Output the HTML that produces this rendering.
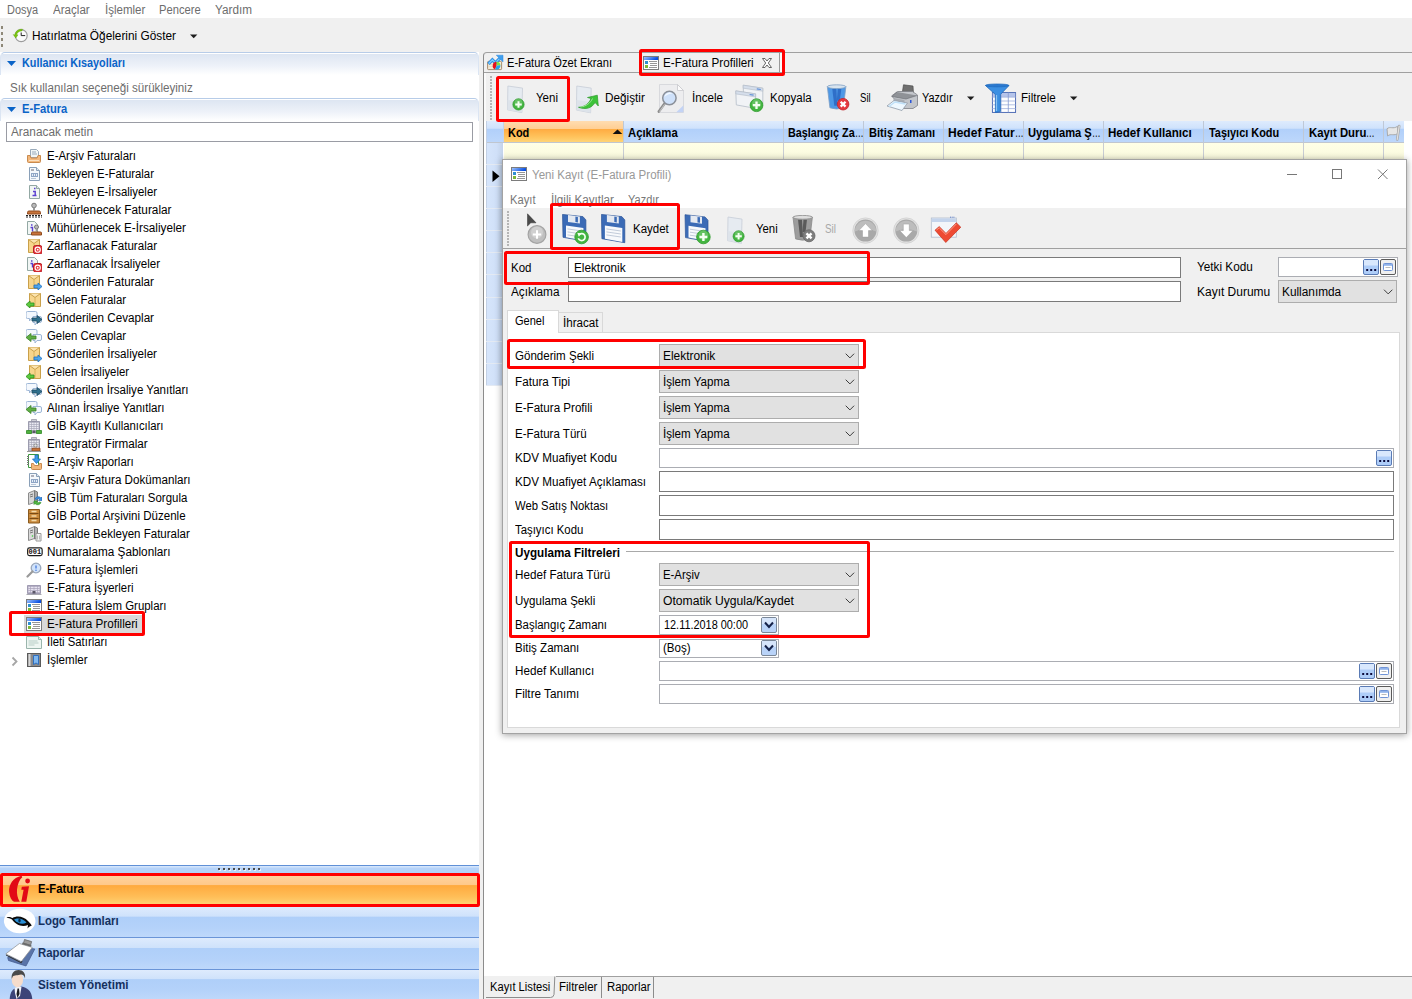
<!DOCTYPE html><html lang="tr"><head><meta charset="utf-8"><title>E-Fatura Profilleri</title><style>

html,body{margin:0;padding:0;}
body{width:1412px;height:999px;overflow:hidden;background:#fff;position:relative;
 font-family:"Liberation Sans",sans-serif;font-size:12px;color:#000;}
div,svg,span.t{position:absolute;box-sizing:border-box;}
span.t{white-space:nowrap;line-height:14px;height:14px;transform-origin:0 50%;}
.b{font-weight:bold;}
.g{color:#6d6d6d;}
.red{border:3px solid #ff0000;z-index:10;border-radius:2.5px;}
.combo{background:#e1e1e1;border:1px solid #adadad;}
.inp{background:#fff;border:1px solid #7a7a7a;}
.inpl{background:#fff;border:1px solid #abadb3;}

</style></head><body>
<div style="left:0px;top:18px;width:1412px;height:981px;background:#f0f0f0;"></div>
<span id="t0" class="t g" style="left:7px;top:3.00px;transform:scaleX(0.9113);">Dosya</span>
<span id="t1" class="t g" style="left:53px;top:3.00px;transform:scaleX(0.9654);">Araçlar</span>
<span id="t2" class="t g" style="left:104.5px;top:3.00px;transform:scaleX(0.9592);">İşlemler</span>
<span id="t3" class="t g" style="left:159.3px;top:3.00px;transform:scaleX(0.9328);">Pencere</span>
<span id="t4" class="t g" style="left:215px;top:3.00px;transform:scaleX(0.9789);">Yardım</span>
<div style="left:1px;top:26px;width:2px;height:3px;background:#8e8878;"></div>
<div style="left:1px;top:32px;width:2px;height:3px;background:#8e8878;"></div>
<div style="left:1px;top:38px;width:2px;height:3px;background:#8e8878;"></div>
<div style="left:1px;top:44px;width:2px;height:3px;background:#8e8878;"></div>
<svg style="left:12px;top:28px" width="17" height="15" viewBox="12 28 17 15"><circle cx="21.200" cy="35.600" r="6" fill="#fbfbfb" stroke="#9c9c9c" stroke-width="1.200"/><path d="M21.200 32.500v3.100h4" fill="none" stroke="#222" stroke-width="1"/><path d="M22.500 29.200C18.500 28.800 15.300 31 14.800 35L13.200 34.600L15.800 38L18 34.800L16.600 35C17 32.500 19 30.800 22 30.900Z" fill="#7ac70c" stroke="#5aa008" stroke-width="0.400"/></svg>
<span id="t5" class="t" style="left:32px;top:28.50px;transform:scaleX(0.9859);">Hatırlatma Öğelerini Göster</span>
<svg style="left:190px;top:34px" width="8" height="5" viewBox="190 34 8 5"><path d="M190 34.4h7.400l-3.700 3.800z" fill="#1e1e1e"/></svg>
<div style="left:0px;top:52px;width:479px;height:947px;background:#fff;"></div>
<div style="left:0px;top:52px;width:479px;height:23px;background:linear-gradient(#fff 0,#fff 1px,#dee6f2 1.500px,#eef2f9 60%,#fff);border:1px solid #b7cce8;border-right-color:#dbe5f3;border-left-color:#dbe5f3;border-bottom:none;border-radius:5px 5px 0 0;"></div>
<svg style="left:7px;top:61px" width="9" height="5" viewBox="0 0 9 5"><path d="M0 0h9l-4.5 5z" fill="#0a64c8"/></svg>
<div style="left:0px;top:98px;width:479px;height:23px;background:linear-gradient(#fff 0,#fff 1px,#dee6f2 1.500px,#eef2f9 60%,#fff);border:1px solid #b7cce8;border-right-color:#dbe5f3;border-left-color:#dbe5f3;border-bottom:none;border-radius:5px 5px 0 0;"></div>
<svg style="left:7px;top:107px" width="9" height="5" viewBox="0 0 9 5"><path d="M0 0h9l-4.5 5z" fill="#0a64c8"/></svg>
<span id="t6" class="t b" style="left:21.6px;top:56.00px;transform:scaleX(0.9031);color:#0a64c8;">Kullanıcı Kısayolları</span>
<span id="t7" class="t g" style="left:10.3px;top:81.00px;transform:scaleX(0.9679);">Sık kullanılan seçeneği sürükleyiniz</span>
<span id="t8" class="t b" style="left:21.6px;top:102.00px;transform:scaleX(0.9304);color:#0a64c8;">E-Fatura</span>
<div class="inp" style="left:6px;top:122px;width:467px;height:20px;border-color:#9a9ca4;"></div>
<span id="t9" class="t g" style="left:11.4px;top:125.00px;transform:scaleX(0.9835);">Aranacak metin</span>
<svg style="left:26px;top:148px" width="16" height="16" viewBox="0 0 16 16"><path d="M4.5 1.5h6l2 2v6h-8z" fill="#f1f6f6" stroke="#9ab"/><path d="M6 4h4M6 6h5" stroke="#9ab"/><path d="M1.5 7.5h2.5l1 2.5h6l1-2.5h2.500v6a1 1 0 0 1-1 1h-11a1 1 0 0 1-1-1z" fill="#f3b87c" stroke="#c98a4e"/><path d="M3 12.500h10" stroke="#fbe0c0"/></svg>
<span id="t10" class="t" style="left:47px;top:149.30px;transform:scaleX(0.9533);">E-Arşiv Faturaları</span>
<svg style="left:26px;top:166px" width="16" height="16" viewBox="0 0 16 16"><path d="M3.5 1.5h7l3 3v10h-10z" fill="#f4f8fc" stroke="#8aa0b8"/><path d="M10.5 1.5v3h3" fill="#dfe8f2" stroke="#8aa0b8"/><path d="M5 4h3" stroke="#667"/><rect x="5.500" y="7.500" width="6" height="3" fill="#e6eef8" stroke="#8fa6c6"/><path d="M7.500 7.500v3M9.500 7.500v3" stroke="#8fa6c6"/><path d="M5 12.500h5" stroke="#b8c6d8"/></svg>
<span id="t11" class="t" style="left:47px;top:167.30px;transform:scaleX(0.9493);">Bekleyen E-Faturalar</span>
<svg style="left:26px;top:184px" width="16" height="16" viewBox="0 0 16 16"><path d="M3.500 1.500h7l3 3v10h-10z" fill="#f1f6f4" stroke="#93a8a4"/><path d="M10.500 1.500v3h3" fill="#dde8e4" stroke="#93a8a4"/><path d="M8 4.500h1.500M7 7.500h2.200v4M6.500 11.500h4" stroke="#5a3fd0" stroke-width="1.400" fill="none"/></svg>
<span id="t12" class="t" style="left:47px;top:185.30px;transform:scaleX(0.9479);">Bekleyen E-İrsaliyeler</span>
<svg style="left:26px;top:202px" width="16" height="16" viewBox="0 0 16 16"><circle cx="8" cy="3.500" r="2.300" fill="#b9b9b9" stroke="#777"/><path d="M7 5.500h2v3h-2z" fill="#999"/><path d="M3 9h10a1.500 1.500 0 0 1 1.500 1.500v1.500h-13v-1.500a1.500 1.500 0 0 1 1.500-1.500z" fill="#c8743a" stroke="#8f4a1e"/><path d="M0 13.500h16M0 15h16" stroke="#222" stroke-dasharray="2 1"/></svg>
<span id="t13" class="t" style="left:47px;top:203.30px;transform:scaleX(0.9824);">Mühürlenecek Faturalar</span>
<svg style="left:26px;top:220px" width="16" height="16" viewBox="0 0 16 16"><path d="M1.500 1.500h7l3 3v10h-10z" fill="#f1f6f4" stroke="#93a8a4"/><path d="M5 5h1.500M4.500 7.500h2v4" stroke="#5a3fd0" stroke-width="1.400" fill="none"/><circle cx="10.500" cy="7" r="2" fill="#b9b9b9" stroke="#777"/><path d="M9.700 9h1.600v2.500h-1.600z" fill="#999"/><path d="M6.500 12h8a1 1 0 0 1 1 1v2h-10v-2a1 1 0 0 1 1-1z" fill="#c8743a" stroke="#8f4a1e"/></svg>
<span id="t14" class="t" style="left:47px;top:221.30px;transform:scaleX(0.9784);">Mühürlenecek E-İrsaliyeler</span>
<svg style="left:26px;top:238px" width="16" height="16" viewBox="0 0 16 16"><path d="M2.500 1.500h11v13h-11z" fill="#f7d58c" stroke="#c9a04a"/><path d="M2.500 1.500l5.500 4 5.500-4" fill="#fbe3ae" stroke="#c9a04a"/><path d="M8 5.500v9" stroke="#d9b25e"/><rect x="7.500" y="7.500" width="8.500" height="8.500" rx="2" fill="#e8343a" stroke="#b81e26"/><circle cx="11.700" cy="11.700" r="2.600" fill="none" stroke="#fff" stroke-width="1.100"/><circle cx="11.700" cy="11.700" r="0.900" fill="#fff"/></svg>
<span id="t15" class="t" style="left:47px;top:239.30px;transform:scaleX(0.9645);">Zarflanacak Faturalar</span>
<svg style="left:26px;top:256px" width="16" height="16" viewBox="0 0 16 16"><path d="M1.500 1.500h7l3 3v10h-10z" fill="#f1f6f4" stroke="#93a8a4"/><path d="M5 5h1.500M4.500 7.500h2v4" stroke="#5a3fd0" stroke-width="1.400" fill="none"/><rect x="7.500" y="7.500" width="8.500" height="8.500" rx="2" fill="#e8343a" stroke="#b81e26"/><circle cx="11.700" cy="11.700" r="2.600" fill="none" stroke="#fff" stroke-width="1.100"/><circle cx="11.700" cy="11.700" r="0.900" fill="#fff"/></svg>
<span id="t16" class="t" style="left:47px;top:257.30px;transform:scaleX(0.9627);">Zarflanacak İrsaliyeler</span>
<svg style="left:26px;top:274px" width="16" height="16" viewBox="0 0 16 16"><path d="M2.500 1.500h11v13h-11z" fill="#f7d58c" stroke="#c9a04a"/><path d="M2.500 1.500l5.500 4 5.500-4" fill="#fbe3ae" stroke="#c9a04a"/><path d="M8 5.500v9" stroke="#d9b25e"/><path d="M8 11h4v-2l4 3.500-4 3.500v-2h-4z" fill="#4fa6ec" stroke="#1f6fc0" stroke-width="0.800"/></svg>
<span id="t17" class="t" style="left:47px;top:275.30px;transform:scaleX(0.9722);">Gönderilen Faturalar</span>
<svg style="left:26px;top:292px" width="16" height="16" viewBox="0 0 16 16"><g transform="translate(1,0)"><path d="M2.500 1.500h11v13h-11z" fill="#f7d58c" stroke="#c9a04a"/><path d="M2.500 1.500l5.500 4 5.500-4" fill="#fbe3ae" stroke="#c9a04a"/><path d="M8 5.500v9" stroke="#d9b25e"/></g><path d="M8 11h-4v-2l-4 3.500 4 3.500v-2h4z" fill="#5cc93e" stroke="#2f8f1e" stroke-width="0.800"/></svg>
<span id="t18" class="t" style="left:47px;top:293.30px;transform:scaleX(0.9475);">Gelen Faturalar</span>
<svg style="left:26px;top:310px" width="16" height="16" viewBox="0 0 16 16"><path d="M1.500 1.500h8a1.500 1.500 0 0 1 1.500 1.500v4a1.500 1.500 0 0 1-1.500 1.500h-4l-2 2.500v-2.500h-2a1.500 1.500 0 0 1-1.500-1.500v-4a1.500 1.500 0 0 1 1.500-1.500z" fill="#f4f8fd" stroke="#9db6d6"/><path d="M7 6.500h7a1.500 1.500 0 0 1 1.500 1.500v3a1.500 1.500 0 0 1-1.500 1.500h-3l-2 2.500v-2.500h-2z" fill="#f4f8fd" stroke="#9db6d6"/><path d="M6 8h5v-2.500l5 4-5 4v-2.500h-5z" fill="#2f6f8c" stroke="#1d4a60" stroke-width="0.800"/></svg>
<span id="t19" class="t" style="left:47px;top:311.30px;transform:scaleX(0.9722);">Gönderilen Cevaplar</span>
<svg style="left:26px;top:328px" width="16" height="16" viewBox="0 0 16 16"><path d="M1.500 1.500h8a1.500 1.500 0 0 1 1.500 1.500v4a1.500 1.500 0 0 1-1.500 1.500h-4l-2 2.500v-2.500h-2a1.500 1.500 0 0 1-1.500-1.500v-4a1.500 1.500 0 0 1 1.500-1.500z" fill="#f4f8fd" stroke="#9db6d6"/><path d="M7 6.500h7a1.500 1.500 0 0 1 1.500 1.500v3a1.500 1.500 0 0 1-1.500 1.500h-3l-2 2.500v-2.500h-2z" fill="#f4f8fd" stroke="#9db6d6"/><path d="M10 8h-5v-2.500l-5 4 5 4v-2.500h5z" fill="#5fae45" stroke="#3b8226" stroke-width="0.800"/></svg>
<span id="t20" class="t" style="left:47px;top:329.30px;transform:scaleX(0.9473);">Gelen Cevaplar</span>
<svg style="left:26px;top:346px" width="16" height="16" viewBox="0 0 16 16"><path d="M2.500 1.500h11v13h-11z" fill="#f7d58c" stroke="#c9a04a"/><path d="M2.500 1.500l5.500 4 5.500-4" fill="#fbe3ae" stroke="#c9a04a"/><path d="M8 5.500v9" stroke="#d9b25e"/><path d="M8 11h4v-2l4 3.500-4 3.500v-2h-4z" fill="#4fa6ec" stroke="#1f6fc0" stroke-width="0.800"/></svg>
<span id="t21" class="t" style="left:47px;top:347.30px;transform:scaleX(0.9701);">Gönderilen İrsaliyeler</span>
<svg style="left:26px;top:364px" width="16" height="16" viewBox="0 0 16 16"><g transform="translate(1,0)"><path d="M2.500 1.500h11v13h-11z" fill="#f7d58c" stroke="#c9a04a"/><path d="M2.500 1.500l5.500 4 5.500-4" fill="#fbe3ae" stroke="#c9a04a"/><path d="M8 5.500v9" stroke="#d9b25e"/></g><path d="M8 11h-4v-2l-4 3.500 4 3.500v-2h4z" fill="#5cc93e" stroke="#2f8f1e" stroke-width="0.800"/></svg>
<span id="t22" class="t" style="left:47px;top:365.30px;transform:scaleX(0.9458);">Gelen İrsaliyeler</span>
<svg style="left:26px;top:382px" width="16" height="16" viewBox="0 0 16 16"><path d="M1.500 1.500h8a1.500 1.500 0 0 1 1.500 1.500v4a1.500 1.500 0 0 1-1.500 1.500h-4l-2 2.500v-2.500h-2a1.500 1.500 0 0 1-1.500-1.500v-4a1.500 1.500 0 0 1 1.500-1.500z" fill="#f4f8fd" stroke="#9db6d6"/><path d="M7 6.500h7a1.500 1.500 0 0 1 1.500 1.500v3a1.500 1.500 0 0 1-1.500 1.500h-3l-2 2.500v-2.500h-2z" fill="#f4f8fd" stroke="#9db6d6"/><path d="M6 8h5v-2.500l5 4-5 4v-2.500h-5z" fill="#2f6f8c" stroke="#1d4a60" stroke-width="0.800"/></svg>
<span id="t23" class="t" style="left:47px;top:383.30px;transform:scaleX(0.9628);">Gönderilen İrsaliye Yanıtları</span>
<svg style="left:26px;top:400px" width="16" height="16" viewBox="0 0 16 16"><path d="M1.500 1.500h8a1.500 1.500 0 0 1 1.500 1.500v4a1.500 1.500 0 0 1-1.500 1.500h-4l-2 2.500v-2.500h-2a1.500 1.500 0 0 1-1.500-1.500v-4a1.500 1.500 0 0 1 1.500-1.500z" fill="#f4f8fd" stroke="#9db6d6"/><path d="M7 6.500h7a1.500 1.500 0 0 1 1.500 1.500v3a1.500 1.500 0 0 1-1.500 1.500h-3l-2 2.500v-2.500h-2z" fill="#f4f8fd" stroke="#9db6d6"/><path d="M10 8h-5v-2.500l-5 4 5 4v-2.500h5z" fill="#5fae45" stroke="#3b8226" stroke-width="0.800"/></svg>
<span id="t24" class="t" style="left:47px;top:401.30px;transform:scaleX(0.9608);">Alınan İrsaliye Yanıtları</span>
<svg style="left:26px;top:418px" width="16" height="16" viewBox="0 0 16 16"><path d="M5.500 1.500h5v2h-5z" fill="#cfcfd8" stroke="#9a9aa8" stroke-width="0.800"/><path d="M2.500 3.500h11v11.500h-11z" fill="#bdbdcb" stroke="#8c8ca0" stroke-width="0.800"/><path d="M3.500 5.500h9M3.500 7.500h9M3.500 9.500h9M3.500 11.500h9" stroke="#ececf4"/><path d="M5.500 3.500v9M8 3.500v9M10.500 3.500v9" stroke="#a4a4b6" stroke-width="0.600"/><path d="M6.500 12.500h3v2.500h-3z" fill="#5a5a66"/><path d="M0.500 12.500h5v3h-5zM10.500 12.500h5v3h-5z" fill="#4fb03f" stroke="#2f8a25" stroke-width="0.800"/></svg>
<span id="t25" class="t" style="left:47px;top:419.30px;transform:scaleX(0.9442);">GİB Kayıtlı Kullanıcıları</span>
<svg style="left:26px;top:436px" width="16" height="16" viewBox="0 0 16 16"><path d="M5.500 1.500h5v2h-5z" fill="#cfcfd8" stroke="#9a9aa8" stroke-width="0.800"/><path d="M2.500 3.500h11v11.500h-11z" fill="#bdbdcb" stroke="#8c8ca0" stroke-width="0.800"/><path d="M3.500 5.500h9M3.500 7.500h9M3.500 9.500h9M3.500 11.500h9" stroke="#ececf4"/><path d="M5.500 3.500v9M8 3.500v9M10.500 3.500v9" stroke="#a4a4b6" stroke-width="0.600"/><path d="M6.500 12.500h3v2.500h-3z" fill="#5a5a66"/><circle cx="9.500" cy="9.500" r="1.600" fill="#e4e4e4" stroke="#777" stroke-width="0.700"/><path d="M6 12.200h8v2.800h-8z" fill="#c8743a" stroke="#8f4a1e" stroke-width="0.800"/><path d="M1 15.500h14" stroke="#999"/></svg>
<span id="t26" class="t" style="left:47px;top:437.30px;transform:scaleX(0.9741);">Entegratör Firmalar</span>
<svg style="left:26px;top:454px" width="16" height="16" viewBox="0 0 16 16"><path d="M2.500 0.500h10v13h-10z" fill="#fff" stroke="#3c9a3c"/><path d="M1 2.500h2M1 4.500h2M1 6.500h2M1 8.500h2M1 10.500h2" stroke="#777"/><path d="M9 1h3v4h2.500l-4 4.500-4-4.500h2.500z" fill="#3f9be8" stroke="#1d6ec0" stroke-width="0.800"/><path d="M5.500 9.500h2l1 2h4l1-2h2v5a1 1 0 0 1-1 1h-8a1 1 0 0 1-1-1z" fill="#f3b87c" stroke="#c98a4e"/></svg>
<span id="t27" class="t" style="left:47px;top:455.30px;transform:scaleX(0.9490);">E-Arşiv Raporları</span>
<svg style="left:26px;top:472px" width="16" height="16" viewBox="0 0 16 16"><path d="M3.5 1.5h7l3 3v10h-10z" fill="#f4f8fc" stroke="#8aa0b8"/><path d="M10.5 1.5v3h3" fill="#dfe8f2" stroke="#8aa0b8"/><path d="M5 4h3" stroke="#667"/><rect x="5.500" y="7.500" width="6" height="3" fill="#e6eef8" stroke="#8fa6c6"/><path d="M7.500 7.500v3M9.500 7.500v3" stroke="#8fa6c6"/><path d="M5 12.500h5" stroke="#b8c6d8"/></svg>
<span id="t28" class="t" style="left:47px;top:473.30px;transform:scaleX(0.9700);">E-Arşiv Fatura Dokümanları</span>
<svg style="left:26px;top:490px" width="16" height="16" viewBox="0 0 16 16"><path d="M2.500 3l6-2.500v12l-6 2z" fill="#d6d6d6" stroke="#8c8c8c"/><path d="M8.500 0.500l3 1.500v10l-3 1z" fill="#a8a8a8" stroke="#7c7c7c"/><path d="M4 5l3-1M4 7l3-1" stroke="#777"/><path d="M9 9a3.500 3.500 0 0 1 6-1l1-1v3.500h-3.500l1-1a2 2 0 0 0-3 0z" fill="#3f8fe0" stroke="#1d62b0" stroke-width="0.600"/><path d="M15 12.500a3.500 3.500 0 0 1-6 1l-1 1v-3.500h3.500l-1 1a2 2 0 0 0 3 0z" fill="#4fb83f" stroke="#2f8a25" stroke-width="0.600"/></svg>
<span id="t29" class="t" style="left:47px;top:491.30px;transform:scaleX(0.9533);">GİB Tüm Faturaları Sorgula</span>
<svg style="left:26px;top:508px" width="16" height="16" viewBox="0 0 16 16"><path d="M2.500 1.500h11v13.500h-11z" fill="#c98a3c" stroke="#8a5a1e"/><path d="M3.500 5.500h9M3.500 10.500h9" stroke="#7a4a14"/><path d="M5.500 3.500h5M5.500 8h5M5.500 12.500h5" stroke="#f3d9a8" stroke-width="1.400"/></svg>
<span id="t30" class="t" style="left:47px;top:509.30px;transform:scaleX(0.9621);">GİB Portal Arşivini Düzenle</span>
<svg style="left:26px;top:526px" width="16" height="16" viewBox="0 0 16 16"><path d="M2.500 3l6-2.500v12l-6 2z" fill="#dadada" stroke="#8c8c8c"/><path d="M8.500 0.500l3 1.500v10l-3 1z" fill="#b0b0b0" stroke="#7c7c7c"/><path d="M4 5l3-1M4 7l3-1" stroke="#777"/><circle cx="6.500" cy="10" r="0.800" fill="#3c3"/><path d="M10 7.500h5v7.500h-5z" fill="#f4f4f4" stroke="#9a9a9a"/><path d="M11.500 9.500v4M13.500 9.500v4" stroke="#bbb"/></svg>
<span id="t31" class="t" style="left:47px;top:527.30px;transform:scaleX(0.9600);">Portalde Bekleyen Faturalar</span>
<svg style="left:27px;top:547px" width="16" height="10" viewBox="0 0 16 10"><rect x="0.650" y="0.900" width="14.500" height="7.700" rx="1.800" fill="#fff" stroke="#1c1c1c" stroke-width="1.200"/><text x="7.900" y="7.400" font-family="Liberation Mono,monospace" font-size="7" font-weight="bold" text-anchor="middle" fill="#111">001</text></svg>
<span id="t32" class="t" style="left:47px;top:545.30px;transform:scaleX(0.9797);">Numaralama Şablonları</span>
<svg style="left:26px;top:562px" width="16" height="16" viewBox="0 0 16 16"><circle cx="10" cy="6" r="4.800" fill="#cfe2fb" stroke="#9aa7ba" stroke-width="1.300"/><path d="M10 3.500v3" stroke="#4a7fe0" stroke-width="1.400"/><circle cx="10" cy="8.300" r="0.800" fill="#4a7fe0"/><path d="M6.500 9.500l-5 5" stroke="#9a9a9a" stroke-width="2.200" stroke-linecap="round"/></svg>
<span id="t33" class="t" style="left:47px;top:563.30px;transform:scaleX(0.9579);">E-Fatura İşlemleri</span>
<svg style="left:26px;top:580px" width="16" height="16" viewBox="0 0 16 16"><path d="M1.500 5.500h13v8h-13z" fill="#b9b4c8" stroke="#8f8aa4" stroke-width="0.800"/><path d="M2.500 7.500h11M2.500 9.500h11M2.500 11.500h11" stroke="#e6e2f0"/><path d="M4.500 5.500v8M8 5.500v5M11.500 5.500v8" stroke="#a49fb8" stroke-width="0.600"/><path d="M6.500 11h3v2.500h-3z" fill="#5a5668"/><path d="M0.500 14.500h15" stroke="#a8a8b0"/></svg>
<span id="t34" class="t" style="left:47px;top:581.30px;transform:scaleX(0.9388);">E-Fatura İşyerleri</span>
<svg style="left:26px;top:598px" width="16" height="16" viewBox="0 0 16 16"><defs><linearGradient id="fg26_598" x1="0" y1="0" x2="1" y2="0.300"><stop offset="0" stop-color="#9cc2ff"/><stop offset="1" stop-color="#0a4fe0"/></linearGradient></defs><rect x="0.500" y="1.500" width="15" height="13" fill="#fff" stroke="#7c7c7c"/><rect x="1" y="2" width="14" height="3" fill="url(#fg26_598)"/><rect x="2" y="6" width="3" height="3" fill="#2f8fd0"/><rect x="2" y="10" width="3" height="3" fill="#7cb838"/><path d="M6 6.500h8M7 8.500h7M7 10.500h7M6 12.500h8" stroke="#8a8a8a" stroke-width="0.900"/></svg>
<span id="t35" class="t" style="left:47px;top:599.30px;transform:scaleX(0.9531);">E-Fatura İşlem Grupları</span>
<div style="left:24px;top:615px;width:118px;height:18px;background:#d9d9d9;"></div>
<svg style="left:26px;top:616px" width="16" height="16" viewBox="0 0 16 16"><defs><linearGradient id="fg26_616" x1="0" y1="0" x2="1" y2="0.300"><stop offset="0" stop-color="#9cc2ff"/><stop offset="1" stop-color="#0a4fe0"/></linearGradient></defs><rect x="0.500" y="1.500" width="15" height="13" fill="#fff" stroke="#7c7c7c"/><rect x="1" y="2" width="14" height="3" fill="url(#fg26_616)"/><rect x="2" y="6" width="3" height="3" fill="#2f8fd0"/><rect x="2" y="10" width="3" height="3" fill="#7cb838"/><path d="M6 6.500h8M7 8.500h7M7 10.500h7M6 12.500h8" stroke="#8a8a8a" stroke-width="0.900"/></svg>
<span id="t36" class="t" style="left:47px;top:617.30px;transform:scaleX(0.9715);">E-Fatura Profilleri</span>
<svg style="left:26px;top:634px" width="16" height="16" viewBox="0 0 16 16"><path d="M0.500 2.500h12l3 3v9h-15z" fill="#eef6f2" stroke="#9ab5ac"/><path d="M12.500 2.500v3h3" fill="#dcebe4" stroke="#9ab5ac"/><path d="M2.500 7h9M2.500 9h10M2.500 11h6" stroke="#b7cdc6"/></svg>
<span id="t37" class="t" style="left:47px;top:635.30px;transform:scaleX(0.9433);">İleti Satırları</span>
<svg style="left:26px;top:652px" width="16" height="16" viewBox="0 0 16 16"><rect x="1.500" y="1.500" width="13" height="13" fill="#8a8a8a" stroke="#5a5a5a"/><rect x="2.500" y="2" width="2" height="12" fill="#d8d8d8"/><path d="M7.500 3.500h5v9l-2.500-1.500-2.500 1.500z" fill="#7fb8f0" stroke="#2f6fc0"/></svg>
<span id="t38" class="t" style="left:47px;top:653.30px;transform:scaleX(0.9639);">İşlemler</span>
<svg style="left:11px;top:656px" width="8" height="11" viewBox="0 0 8 11"><path d="M1.500 1.500l4 4-4 4" fill="none" stroke="#a6a6a6" stroke-width="1.800"/></svg>
<div class="red" style="left:9px;top:611px;width:136px;height:25px;"></div>
<div style="left:0px;top:865px;width:479px;height:8px;background:linear-gradient(#dbe9fc 0%,#b6d3f9 35%,#b3d1f8 100%);border-top:1px solid #6090d6;"></div>
<div style="left:219px;top:869px;width:2px;height:2px;background:#e8eef8;"></div>
<div style="left:218px;top:868px;width:2px;height:2px;background:#4a4a4a;"></div>
<div style="left:224px;top:869px;width:2px;height:2px;background:#e8eef8;"></div>
<div style="left:223px;top:868px;width:2px;height:2px;background:#4a4a4a;"></div>
<div style="left:229px;top:869px;width:2px;height:2px;background:#e8eef8;"></div>
<div style="left:228px;top:868px;width:2px;height:2px;background:#4a4a4a;"></div>
<div style="left:234px;top:869px;width:2px;height:2px;background:#e8eef8;"></div>
<div style="left:233px;top:868px;width:2px;height:2px;background:#4a4a4a;"></div>
<div style="left:239px;top:869px;width:2px;height:2px;background:#e8eef8;"></div>
<div style="left:238px;top:868px;width:2px;height:2px;background:#4a4a4a;"></div>
<div style="left:244px;top:869px;width:2px;height:2px;background:#e8eef8;"></div>
<div style="left:243px;top:868px;width:2px;height:2px;background:#4a4a4a;"></div>
<div style="left:249px;top:869px;width:2px;height:2px;background:#e8eef8;"></div>
<div style="left:248px;top:868px;width:2px;height:2px;background:#4a4a4a;"></div>
<div style="left:254px;top:869px;width:2px;height:2px;background:#e8eef8;"></div>
<div style="left:253px;top:868px;width:2px;height:2px;background:#4a4a4a;"></div>
<div style="left:259px;top:869px;width:2px;height:2px;background:#e8eef8;"></div>
<div style="left:258px;top:868px;width:2px;height:2px;background:#4a4a4a;"></div>
<div style="left:0px;top:873px;width:479px;height:34px;background:linear-gradient(#ffd5a6 0%,#ffc98a 34%,#ffaa3e 37%,#ffbe58 70%,#ffd97c 100%);"></div>
<div style="left:0px;top:907px;width:479px;height:31px;background:linear-gradient(#deebfd 0%,#cfe2fb 31%,#afcff9 33%,#b4d2fa 70%,#bed8fb 100%);border-bottom:1px solid #6a95d8;"></div>
<div style="left:0px;top:938px;width:479px;height:32px;background:linear-gradient(#deebfd 0%,#cfe2fb 31%,#afcff9 33%,#b4d2fa 70%,#bed8fb 100%);border-bottom:1px solid #6a95d8;"></div>
<div style="left:0px;top:970px;width:479px;height:29px;background:linear-gradient(#deebfd 0%,#cfe2fb 31%,#afcff9 33%,#b4d2fa 70%,#bed8fb 100%);"></div>
<svg style="left:8px;top:875px" width="24" height="28" viewBox="8 875 24 28"><path d="M21.500 875.800C13 877.500 8.500 885 9.100 892C9.600 897 11.500 900.500 14 901.800L19.800 901.800C17.600 898.500 16.600 894 17 889.500C17.500 884 19.500 879.500 22.300 877.200Z" fill="#e20a16"/><circle cx="27.600" cy="881" r="2.400" fill="#e20a16"/><path d="M21.800 886.800L29 886.200L26.300 901.800L21.300 901.800L23.600 889.800L21.300 889.800Z" fill="#e20a16"/></svg>
<svg style="left:3px;top:908px" width="34" height="26" viewBox="3 908 34 26"><ellipse cx="19.700" cy="921" rx="15.800" ry="12.200" fill="#fff"/><path d="M6.500 917.500C9 916.500 11 917.500 12.500 918C17 915 24 916.500 28 921C29.500 922.500 31 924 31.800 925.500C30.500 926 29 926.500 27.500 928.500L28 925C22 927.500 16 925 12 919.500C10 918.500 8.500 918 6.500 917.500Z" fill="#0b0b0b"/><path d="M14 919.500C17 917.500 23 918 26.500 922.500C22.500 925 17 923.500 14 919.500Z" fill="#2a8fd6"/><ellipse cx="19.500" cy="920.600" rx="1.200" ry="2" fill="#0a2a4a"/></svg>
<svg style="left:4px;top:938px" width="32" height="29" viewBox="4 938 32 29"><path d="M7.700 957.500L19.500 947L34.800 949L26 966L8.500 960.500Z" fill="#5a74a8" stroke="#3f5689" stroke-width="0.700"/><path d="M5.800 953.900L19.400 943.500L32.300 947.400L21.300 961.600Z" fill="#fff" stroke="#8c8c8c" stroke-width="0.700"/><path d="M6 955L21.300 962.800L22 961" fill="none" stroke="#333" stroke-width="1"/><path d="M24.500 939.500L31.600 941.600L30.600 945.300L23.500 943.200Z" fill="#9a9a9a" stroke="#5a5a5a" stroke-width="0.700"/><path d="M22.500 942.500L31.500 945.200L31 946.800L22 944.200Z" fill="#6a6a6a"/></svg>
<svg style="left:8px;top:969px" width="26" height="30" viewBox="8 969 26 30"><path d="M9.700 999C10 992 13 988.500 17 987.500L21.500 986.500C27 987.500 31.500 990.500 32.300 999Z" fill="#3d4478"/><path d="M14.500 988L18 986.500L21.500 986.800L20 996L16.500 999L15 993Z" fill="#f4f4f8"/><path d="M17.500 988.500L19 988.500L19.500 994L17.500 998L16.500 994Z" fill="#1e1e26"/><ellipse cx="17.400" cy="979.700" rx="5.700" ry="7.600" fill="#f6dccb"/><path d="M11.700 979C11 973 14.500 970 18.500 970C23 970 25.800 973 25 978.500C24.500 976 23 974.500 21 974.500C18 975.500 14 975 12.800 976.500Z" fill="#4a4a4a"/></svg>
<span id="t39" class="t b" style="left:38px;top:881.50px;transform:scaleX(0.9427);">E-Fatura</span>
<span id="t40" class="t b" style="left:38px;top:914.00px;transform:scaleX(0.9480);color:#15305e;">Logo Tanımları</span>
<span id="t41" class="t b" style="left:38px;top:946.20px;transform:scaleX(0.9441);color:#15305e;">Raporlar</span>
<span id="t42" class="t b" style="left:38px;top:977.50px;transform:scaleX(0.9727);color:#15305e;">Sistem Yönetimi</span>
<div class="red" style="left:0px;top:873px;width:480px;height:34px;"></div>
<div style="left:484px;top:121px;width:928px;height:855px;background:#fff;"></div>
<div style="left:483px;top:52px;width:929px;height:947px;border-left:1px solid #8c8c8c;border-top:1px solid #a0a0a0;border-radius:4px 0 0 0;"></div>
<div style="left:484px;top:72px;width:928px;height:1px;background:#a0a0a0;"></div>
<div style="left:484px;top:73px;width:2px;height:48px;background:#fafafa;"></div>
<div style="left:638px;top:53px;width:142px;height:19px;background:#f0f0f0;border-right:1px solid #999;"></div>
<div style="left:780px;top:53px;width:2px;height:19px;background:#fafafa;"></div>
<svg style="left:486px;top:54px" width="18" height="17" viewBox="486 54 18 17"><rect x="487.600" y="61.400" width="14" height="8.200" rx="0.800" fill="#f4ead6" stroke="#9c7f62" stroke-width="0.900"/><path d="M488.500 64.500h6M488.500 66.500h6" stroke="#e0d2b8" stroke-width="0.600"/><path d="M488.500 63.800L492.400 59.800L495.400 62.800L499.800 58.400" fill="none" stroke="#2f8fe6" stroke-width="3.300" stroke-linejoin="miter"/><path d="M488.800 63.500L492.400 59.800L495.400 62.800L499.500 58.700" fill="none" stroke="#7fd0ff" stroke-width="1.200"/><path d="M496.300 55.200h6.700v6.700z" fill="#3f9fee" stroke="#2b86dc" stroke-width="0.500"/><path d="M496.600 65.700v-3.900a3.900 3.900 0 0 0-1.500 7.500z" fill="#e8101c"/><path d="M496.600 65.700v-3.900a3.900 3.900 0 0 1 3.800 3.200z" fill="#7fe040"/><path d="M496.600 65.700l3.800-0.700a3.900 3.900 0 0 1-5.300 4.300z" fill="#25a4ea"/></svg>
<span id="t43" class="t" style="left:507.2px;top:56.00px;transform:scaleX(0.9261);">E-Fatura Özet Ekranı</span>
<svg style="left:643px;top:55px" width="16" height="16" viewBox="0 0 16 16"><defs><linearGradient id="fg643_55" x1="0" y1="0" x2="1" y2="0.300"><stop offset="0" stop-color="#9cc2ff"/><stop offset="1" stop-color="#0a4fe0"/></linearGradient></defs><rect x="0.500" y="1.500" width="15" height="13" fill="#fff" stroke="#7c7c7c"/><rect x="1" y="2" width="14" height="3" fill="url(#fg643_55)"/><rect x="2" y="6" width="3" height="3" fill="#2f8fd0"/><rect x="2" y="10" width="3" height="3" fill="#7cb838"/><path d="M6 6.500h8M7 8.500h7M7 10.500h7M6 12.500h8" stroke="#8a8a8a" stroke-width="0.900"/></svg>
<span id="t44" class="t" style="left:663px;top:56.00px;transform:scaleX(0.9715);">E-Fatura Profilleri</span>
<svg style="left:761px;top:57px" width="12" height="12" viewBox="0 0 12 12"><path d="M1.5 1.5h2.5l2 2.5 2-2.5h2.5l-3.2 4.5 3.2 4.5h-2.5l-2-2.5-2 2.5h-2.5l3.2-4.5z" fill="#fff" stroke="#555" stroke-width="0.9"/></svg>
<div class="red" style="left:639px;top:49px;width:146px;height:27px;"></div>
<div style="left:490px;top:76px;width:2px;height:2px;background:#b5b5b5;"></div>
<div style="left:490px;top:79px;width:2px;height:2px;background:#b5b5b5;"></div>
<div style="left:490px;top:82px;width:2px;height:2px;background:#b5b5b5;"></div>
<div style="left:490px;top:85px;width:2px;height:2px;background:#b5b5b5;"></div>
<div style="left:490px;top:88px;width:2px;height:2px;background:#b5b5b5;"></div>
<div style="left:490px;top:91px;width:2px;height:2px;background:#b5b5b5;"></div>
<div style="left:490px;top:94px;width:2px;height:2px;background:#b5b5b5;"></div>
<div style="left:490px;top:97px;width:2px;height:2px;background:#b5b5b5;"></div>
<div style="left:490px;top:100px;width:2px;height:2px;background:#b5b5b5;"></div>
<div style="left:490px;top:103px;width:2px;height:2px;background:#b5b5b5;"></div>
<div style="left:490px;top:106px;width:2px;height:2px;background:#b5b5b5;"></div>
<div style="left:490px;top:109px;width:2px;height:2px;background:#b5b5b5;"></div>
<div style="left:490px;top:112px;width:2px;height:2px;background:#b5b5b5;"></div>
<div style="left:490px;top:115px;width:2px;height:2px;background:#b5b5b5;"></div>
<div style="left:490px;top:118px;width:2px;height:2px;background:#b5b5b5;"></div>
<svg style="left:506px;top:85px" width="20" height="29" viewBox="506 85 20 29"><path d="M507.9 86L522.5 88.1L521.9 112.6L507.5 109.8Z" fill="#e6ebf1" stroke="#c6cdd7" stroke-width="0.800"/><path d="M507.7 100L522.2 102L521.9 112.6L507.5 109.8Z" fill="#dde3ea"/><circle cx="518.5" cy="104.4" r="5.6" fill="#43b540" stroke="#2f9a2d" stroke-width="0.800"/><circle cx="518.5" cy="103.0" r="3.9199999999999995" fill="#fff" opacity="0.180"/><path d="M515.252 104.4h6.4959999999999996M518.5 101.152v6.4959999999999996" stroke="#f4fff2" stroke-width="2.016"/></svg>
<span id="t45" class="t" style="left:536px;top:91.00px;transform:scaleX(0.9598);">Yeni</span>
<svg style="left:575px;top:85px" width="25" height="29" viewBox="575 85 25 29"><path d="M576.8 86L591.2 88.1L590.6 112.8L576.4 110.0Z" fill="#e6ebf1" stroke="#c6cdd7" stroke-width="0.800"/><path d="M576.6 100L590.9000000000001 102L590.6 112.8L576.4 110.0Z" fill="#dde3ea"/><path d="M578.500 107.300C585 107 589 103.500 591 98.500L587.500 97.500L597.300 95.200L598.300 106L595 102.500C592 108 586 110 578.500 107.300Z" fill="#3cc338" stroke="#2c9a2a" stroke-width="0.700"/><path d="M580.500 107C586 106.500 590.500 103 592.500 98.500" fill="none" stroke="#9be894" stroke-width="1"/></svg>
<span id="t46" class="t" style="left:605px;top:91.00px;transform:scaleX(0.9782);">Değiştir</span>
<svg style="left:656px;top:83px" width="30" height="32" viewBox="656 83 30 32"><path d="M659.500 84.500h18l6 6v22h-24z" fill="#ededef" stroke="#d2d3d8" stroke-width="0.800"/><path d="M677.500 84.500v6h6z" fill="#fbfbfb" stroke="#c6c6cc" stroke-width="0.800"/><path d="M683.300 105.500v6.800h-7z" fill="#c3d3f5"/><path d="M664.800 103.300l-6 8.300" stroke="#8d8d8d" stroke-width="2.600" stroke-linecap="round"/><path d="M664.500 104.500l-5 7" stroke="#d8d8d8" stroke-width="0.800"/><circle cx="669.400" cy="98" r="6.700" fill="#cfe1fa" stroke="#8b9099" stroke-width="1.500"/><path d="M664.500 97a5 5 0 0 1 8-3.500c-3 0-6 1.500-8 3.500z" fill="#f2f8ff"/></svg>
<span id="t47" class="t" style="left:692.3px;top:91.00px;transform:scaleX(0.9647);">İncele</span>
<svg style="left:735px;top:84px" width="30" height="29" viewBox="735 84 30 29"><path d="M743.2 85.2L762.8 88.2L762.8 104L743.7 100.5Z" fill="#f1f3f6" stroke="#b4bcc8" stroke-width="0.800"/><path d="M743.2 85.2L762.8 88.2L762.8 91.2L743.2 88.2Z" fill="#d5deeb" stroke="#b4bcc8" stroke-width="0.600"/><path d="M756.8 88.8l4 0.700" stroke="#5f8fd8" stroke-width="1.200"/><path d="M735.8 90.9L755.6 93.9L755.6 108.4L736.3 104.9Z" fill="#f1f3f6" stroke="#b4bcc8" stroke-width="0.800"/><path d="M735.8 90.9L755.6 93.9L755.6 96.9L735.8 93.9Z" fill="#d5deeb" stroke="#b4bcc8" stroke-width="0.600"/><path d="M749.6 94.5l4 0.700" stroke="#5f8fd8" stroke-width="1.200"/><circle cx="756.5" cy="105.2" r="6.4" fill="#43b540" stroke="#2f9a2d" stroke-width="0.800"/><circle cx="756.5" cy="103.60000000000001" r="4.4799999999999995" fill="#fff" opacity="0.180"/><path d="M752.788 105.2h7.4239999999999995M756.5 101.488v7.4239999999999995" stroke="#f4fff2" stroke-width="2.304"/></svg>
<span id="t48" class="t" style="left:770px;top:91.00px;transform:scaleX(0.9614);">Kopyala</span>
<svg style="left:826px;top:84px" width="25" height="28" viewBox="826 84 25 28"><path d="M827.3 86.5L845.9 86.5L843.3 107.8Q836.5999999999999 110.3 829.9 107.8Z" fill="#4e98e6" stroke="#7f9fc4" stroke-width="0.800"/><path d="M832.3 89L834.3 105.8L837.3 105.8L836.3 89Z" fill="#2f6fc8"/><path d="M837.8 89L836.8 100.8L839.8 100.8L841.3 89Z" fill="#2f6fc8"/><ellipse cx="836.5999999999999" cy="86.7" rx="9.300000000000011" ry="1.900" fill="#d9e4ee" stroke="#7f9fc4" stroke-width="0.800"/><circle cx="843.1" cy="104.2" r="5.8" fill="#e5393e" stroke="#c2252b" stroke-width="0.800"/><path d="M840.664 101.76400000000001l4.872 4.872M845.5360000000001 101.76400000000001l-4.872 4.872" stroke="#fff" stroke-width="2.32"/></svg>
<span id="t49" class="t" style="left:859.5px;top:91.00px;transform:scaleX(0.8019);">Sil</span>
<svg style="left:886px;top:84px" width="33" height="28" viewBox="886 84 33 28"><path d="M903.500 84.800l9.500 1.200 0.500 8.500h-11.500z" fill="#6f6f6f" stroke="#4d4d4d" stroke-width="0.700"/><path d="M891.500 96l6-4.500h15l5 3.500v10.500l-4.500 3h-9z" fill="#c3c6cb" stroke="#7d8087" stroke-width="0.800"/><path d="M897 92l-5 4.500 14 2.500 11-3.500" fill="#8f9297" stroke="#6a6d74" stroke-width="0.600"/><path d="M893.500 98l11 2v8.500l-11-3z" fill="#a9adb3"/><path d="M887 106l7-5.500 13.500 2.500-5.500 7.500z" fill="#eef8ff" stroke="#8f9aa8" stroke-width="0.800"/><path d="M889 106.500l6-4.500 10.500 2" fill="none" stroke="#bfe0f8" stroke-width="1.500"/><rect x="910" y="100" width="1.500" height="3" fill="#2b55d8"/></svg>
<span id="t50" class="t" style="left:922px;top:91.00px;transform:scaleX(0.9084);">Yazdır</span>
<svg style="left:967px;top:96px" width="8" height="5" viewBox="967 96 8 5"><path d="M967 96.4h7.400l-3.700 3.800z" fill="#1e1e1e"/></svg>
<svg style="left:985px;top:83px" width="32" height="31" viewBox="985 83 32 31"><rect x="992.400" y="92.600" width="23.200" height="19.800" fill="#fdfeff" stroke="#3f5fae" stroke-width="0.900"/><rect x="992.800" y="93" width="22.400" height="4" fill="#b5c4ea"/><path d="M992.400 97.200h23.200M992.400 101h23.200M992.400 104.800h23.200M992.400 108.600h23.200" stroke="#9fb0dc" stroke-width="0.800"/><path d="M1001 92.600v19.800M1008.300 92.600v19.800" stroke="#8499cf" stroke-width="0.800"/><path d="M985.500 85.500L1009 85.500L1000.400 94.500L1000.400 111.500L995.400 112.500L995.400 94.500Z" fill="#3b8fe2" stroke="#1f68ba" stroke-width="0.800"/><path d="M996.500 95v16" stroke="#8cc3f3" stroke-width="1.200"/><ellipse cx="997.200" cy="85.400" rx="11.700" ry="1.500" fill="#2a78cf" stroke="#1f68ba" stroke-width="0.600"/></svg>
<span id="t51" class="t" style="left:1021.3px;top:91.00px;transform:scaleX(0.9662);">Filtrele</span>
<svg style="left:1070px;top:96px" width="8" height="5" viewBox="1070 96 8 5"><path d="M1070 96.4h7.400l-3.700 3.800z" fill="#1e1e1e"/></svg>
<div class="red" style="left:496px;top:76px;width:74px;height:46px;"></div>
<div style="left:486px;top:121px;width:918px;height:22px;background:linear-gradient(#deebfd 0%,#cfe2fc 35%,#b1d0fa 38%,#bdd7fb 100%);border-bottom:1px solid #c0c6cf;"></div>
<div style="left:504px;top:121px;width:120px;height:21px;background:linear-gradient(#ffdcb0 0%,#ffcf94 36%,#ffac42 40%,#ffc35c 75%,#ffd476 100%);"></div>
<div style="left:623px;top:121px;width:1px;height:43px;background:#bfc8d6;"></div>
<div style="left:783px;top:121px;width:1px;height:43px;background:#bfc8d6;"></div>
<div style="left:863px;top:121px;width:1px;height:43px;background:#bfc8d6;"></div>
<div style="left:943px;top:121px;width:1px;height:43px;background:#bfc8d6;"></div>
<div style="left:1023px;top:121px;width:1px;height:43px;background:#bfc8d6;"></div>
<div style="left:1103px;top:121px;width:1px;height:43px;background:#bfc8d6;"></div>
<div style="left:1203px;top:121px;width:1px;height:43px;background:#bfc8d6;"></div>
<div style="left:1303px;top:121px;width:1px;height:43px;background:#bfc8d6;"></div>
<div style="left:1383px;top:121px;width:1px;height:43px;background:#bfc8d6;"></div>
<div style="left:503px;top:121px;width:1px;height:21px;background:#c4d4ea;"></div>
<span id="t52" class="t b" style="left:508.4px;top:126.00px;transform:scaleX(0.9131);">Kod</span>
<span id="t53" class="t b" style="left:628px;top:126.00px;transform:scaleX(0.9430);">Açıklama</span>
<span id="t54" class="t b" style="left:788.3px;top:126.00px;transform:scaleX(0.9010);">Başlangıç Za</span>
<span id="t55" class="t b" style="left:868.5px;top:126.00px;transform:scaleX(0.9249);">Bitiş Zamanı</span>
<span id="t56" class="t b" style="left:948px;top:126.00px;transform:scaleX(1.0017);">Hedef Fatur</span>
<span id="t57" class="t b" style="left:1028.3px;top:126.00px;transform:scaleX(0.9286);">Uygulama Ş</span>
<span id="t58" class="t b" style="left:1108.2px;top:126.00px;transform:scaleX(0.9644);">Hedef Kullanıcı</span>
<span id="t59" class="t b" style="left:1208.6px;top:126.00px;transform:scaleX(0.9100);">Taşıyıcı Kodu</span>
<span id="t60" class="t b" style="left:1308.6px;top:126.00px;transform:scaleX(0.9458);">Kayıt Duru</span>
<span id="t61" class="t" style="left:855px;top:126.00px;transform:scaleX(0.7167);">…</span>
<span id="t62" class="t" style="left:1014.6px;top:126.00px;transform:scaleX(0.7167);">…</span>
<span id="t63" class="t" style="left:1092.2px;top:126.00px;transform:scaleX(0.7167);">…</span>
<span id="t64" class="t" style="left:1366px;top:126.00px;transform:scaleX(0.7167);">…</span>
<svg style="left:612px;top:129px" width="11" height="6" viewBox="0 0 11 6"><path d="M5.5 0.5l4.8 4.5h-9.6z" fill="#111"/></svg>
<svg style="left:1385px;top:124px" width="17" height="18" viewBox="1385 124 17 18"><path d="M1387 128.800C1390 126 1393 129.500 1397.500 126.300L1398.300 133.200C1394 136.500 1391 133 1387.600 136Z" fill="#e6e6e6" stroke="#a4a4a4" stroke-width="0.900"/><path d="M1399.200 126L1397.200 139.500" stroke="#a8a8a8" stroke-width="2.600" stroke-linecap="round"/><path d="M1399.200 126L1397.200 139.500" stroke="#e2e2e2" stroke-width="1.200" stroke-linecap="round"/></svg>
<div style="left:504px;top:143px;width:900px;height:21px;background:linear-gradient(#ffffe6,#f8f8dc);"></div>
<div style="left:623px;top:143px;width:1px;height:21px;background:#c9cdd3;"></div>
<div style="left:783px;top:143px;width:1px;height:21px;background:#c9cdd3;"></div>
<div style="left:863px;top:143px;width:1px;height:21px;background:#c9cdd3;"></div>
<div style="left:943px;top:143px;width:1px;height:21px;background:#c9cdd3;"></div>
<div style="left:1023px;top:143px;width:1px;height:21px;background:#c9cdd3;"></div>
<div style="left:1103px;top:143px;width:1px;height:21px;background:#c9cdd3;"></div>
<div style="left:1203px;top:143px;width:1px;height:21px;background:#c9cdd3;"></div>
<div style="left:1303px;top:143px;width:1px;height:21px;background:#c9cdd3;"></div>
<div style="left:1383px;top:143px;width:1px;height:21px;background:#c9cdd3;"></div>
<div style="left:486px;top:143px;width:17px;height:242px;background:linear-gradient(90deg,#d6e5fb,#d0e0f8 60%,#c3d3ea);border-left:1px solid #c3d0e4;"></div>
<div style="left:486px;top:164px;width:17px;height:1px;background:#e4eaf3;"></div>
<div style="left:486px;top:186px;width:17px;height:1px;background:#e4eaf3;"></div>
<div style="left:486px;top:208px;width:17px;height:1px;background:#e4eaf3;"></div>
<div style="left:486px;top:230px;width:17px;height:1px;background:#e4eaf3;"></div>
<div style="left:486px;top:252px;width:17px;height:1px;background:#e4eaf3;"></div>
<div style="left:486px;top:274px;width:17px;height:1px;background:#e4eaf3;"></div>
<div style="left:486px;top:297px;width:17px;height:1px;background:#e4eaf3;"></div>
<div style="left:486px;top:319px;width:17px;height:1px;background:#e4eaf3;"></div>
<div style="left:486px;top:341px;width:17px;height:1px;background:#e4eaf3;"></div>
<div style="left:486px;top:363px;width:17px;height:1px;background:#e4eaf3;"></div>
<div style="left:486px;top:385px;width:17px;height:1px;background:#e4eaf3;"></div>
<div style="left:486px;top:121px;width:1px;height:22px;background:#c3d0e4;"></div>
<svg style="left:492px;top:170px" width="8" height="13" viewBox="0 0 8 13"><path d="M0.500 0.500l7 5.800-7 5.800z" fill="#000"/></svg>
<div style="left:484px;top:977px;width:928px;height:22px;background:#f0f0f0;"></div>
<div style="left:555px;top:976px;width:857px;height:1px;background:#a0a0a0;"></div>
<div style="left:484px;top:976px;width:72px;height:1px;background:#f0f0f0;"></div>
<svg style="left:484px;top:975px" width="76" height="24" viewBox="0 0 76 24"><path d="M2 22.500H66.500Q69.500 22.500 70 19.500L70.800 1.500" fill="none" stroke="#8c8c8c" stroke-width="1"/></svg>
<div style="left:601px;top:977px;width:1px;height:21px;background:#8c8c8c;"></div>
<div style="left:653px;top:977px;width:1px;height:21px;background:#8c8c8c;"></div>
<span id="t65" class="t" style="left:490.4px;top:980.00px;transform:scaleX(0.9319);">Kayıt Listesi</span>
<span id="t66" class="t" style="left:559.4px;top:980.00px;transform:scaleX(0.9596);">Filtreler</span>
<span id="t67" class="t" style="left:606.5px;top:980.00px;transform:scaleX(0.9450);">Raporlar</span>
<div style="left:502px;top:159px;width:905px;height:575px;background:#f0f0f0;border:1px solid #a3a3a3;box-shadow:0 1px 7px rgba(0,0,0,0.38);"></div>
<div style="left:503px;top:160px;width:903px;height:48px;background:#fff;"></div>
<svg style="left:511px;top:166px" width="16" height="16" viewBox="0 0 16 16"><defs><linearGradient id="fg511_166" x1="0" y1="0" x2="1" y2="0.300"><stop offset="0" stop-color="#9cc2ff"/><stop offset="1" stop-color="#0a4fe0"/></linearGradient></defs><rect x="0.500" y="1.500" width="15" height="13" fill="#fff" stroke="#7c7c7c"/><rect x="1" y="2" width="14" height="3" fill="url(#fg511_166)"/><rect x="2" y="6" width="3" height="3" fill="#2f8fd0"/><rect x="2" y="10" width="3" height="3" fill="#7cb838"/><path d="M6 6.500h8M7 8.500h7M7 10.500h7M6 12.500h8" stroke="#8a8a8a" stroke-width="0.900"/></svg>
<span id="t68" class="t" style="left:532.3px;top:167.50px;transform:scaleX(0.9610);color:#999;">Yeni Kayıt (E-Fatura Profili)</span>
<svg style="left:1286px;top:169px" width="104" height="11" viewBox="0 0 104 11"><path d="M1 5.5h10" stroke="#777" stroke-width="1" fill="none"/><rect x="46.5" y="0.5" width="9" height="9" fill="none" stroke="#777"/><path d="M92 0.5l9.5 9.5M101.5 0.5l-9.5 9.5" stroke="#777" stroke-width="1" fill="none"/></svg>
<span id="t69" class="t" style="left:510.3px;top:192.70px;transform:scaleX(0.9357);color:#777;">Kayıt</span>
<span id="t70" class="t" style="left:550.5px;top:192.70px;transform:scaleX(0.9739);color:#777;">İlgili Kayıtlar</span>
<span id="t71" class="t" style="left:627.9px;top:192.70px;transform:scaleX(0.9172);color:#777;">Yazdır</span>
<div style="left:503px;top:248px;width:903px;height:1px;background:#a0a0a0;"></div>
<div style="left:507px;top:211px;width:2px;height:2px;background:#b5b5b5;"></div>
<div style="left:507px;top:214px;width:2px;height:2px;background:#b5b5b5;"></div>
<div style="left:507px;top:217px;width:2px;height:2px;background:#b5b5b5;"></div>
<div style="left:507px;top:220px;width:2px;height:2px;background:#b5b5b5;"></div>
<div style="left:507px;top:223px;width:2px;height:2px;background:#b5b5b5;"></div>
<div style="left:507px;top:226px;width:2px;height:2px;background:#b5b5b5;"></div>
<div style="left:507px;top:229px;width:2px;height:2px;background:#b5b5b5;"></div>
<div style="left:507px;top:232px;width:2px;height:2px;background:#b5b5b5;"></div>
<div style="left:507px;top:235px;width:2px;height:2px;background:#b5b5b5;"></div>
<div style="left:507px;top:238px;width:2px;height:2px;background:#b5b5b5;"></div>
<div style="left:507px;top:241px;width:2px;height:2px;background:#b5b5b5;"></div>
<div style="left:507px;top:244px;width:2px;height:2px;background:#b5b5b5;"></div>
<svg style="left:526px;top:213px" width="22" height="32" viewBox="526 213 22 32"><path d="M527.500 213.800v12.200l3.300-3.200h5.200z" fill="#4a4a4a" stroke="#2e2e2e" stroke-width="0.500"/><circle cx="537" cy="234.500" r="8.900" fill="#c0c0c0" stroke="#a4a4a4" stroke-width="1.200"/><circle cx="537" cy="232.500" r="6" fill="#d0d0d0"/><path d="M532.800 234.500h8.400M537 230.300v8.400" stroke="#fff" stroke-width="2"/></svg>
<svg style="left:562px;top:214px" width="28" height="31" viewBox="562 214 28 31"><path d="M562.5 214.4L582.9 216.6L585.9 219.9L585.9 241.3L563.0 237.3Z" fill="#3b6bb6" stroke="#2c5498" stroke-width="0.700"/><path d="M568.0 215.1L579.9 216.4L579.9 223.4L568.0 221.9Z" fill="#e4e9f1"/><path d="M575.4 216.6L577.9 216.9L577.9 222.4L575.4 222.1Z" fill="#3b6bb6"/><path d="M566.0 225.4L583.4 227.9L583.4 240.5L566.0 237.3Z" fill="#f7f9fc"/><path d="M567.5 228.9L581.9 231.0M567.5 231.9L581.9 234.0M567.5 234.9L581.9 237.0" stroke="#b4bfd0" stroke-width="0.800"/><circle cx="581.600" cy="237" r="6.800" fill="#43b540" stroke="#2f9a2d" stroke-width="0.800"/><path d="M578.300 238.200a3.500 3.500 0 1 0 1-3.800" fill="none" stroke="#f4fff2" stroke-width="1.700"/><path d="M577.300 232.800l4.200 0.600-2.700 3.300z" fill="#f4fff2"/></svg>
<svg style="left:601px;top:214px" width="25" height="30" viewBox="601 214 25 30"><path d="M601.4 214.4L621.8 216.6L624.8 219.9L624.8 242.7L601.9 238.7Z" fill="#3b6bb6" stroke="#2c5498" stroke-width="0.700"/><path d="M606.9 215.1L618.8 216.4L618.8 223.4L606.9 221.9Z" fill="#e4e9f1"/><path d="M614.3 216.6L616.8 216.9L616.8 222.4L614.3 222.1Z" fill="#3b6bb6"/><path d="M604.9 225.4L622.3 227.9L622.3 241.89999999999998L604.9 238.7Z" fill="#f7f9fc"/><path d="M606.4 228.9L620.8 231.0M606.4 231.9L620.8 234.0M606.4 234.9L620.8 237.0" stroke="#b4bfd0" stroke-width="0.800"/></svg>
<span id="t72" class="t" style="left:633px;top:221.50px;transform:scaleX(0.9583);">Kaydet</span>
<svg style="left:684px;top:214px" width="28" height="31" viewBox="684 214 28 31"><path d="M685 214.7L705 216.89999999999998L708 220.2L708 241.6L685.5 237.6Z" fill="#3b6bb6" stroke="#2c5498" stroke-width="0.700"/><path d="M690.5 215.39999999999998L702 216.7L702 223.7L690.5 222.2Z" fill="#e4e9f1"/><path d="M697.5 216.89999999999998L700 217.2L700 222.7L697.5 222.39999999999998Z" fill="#3b6bb6"/><path d="M688.5 225.7L705.5 228.2L705.5 240.79999999999998L688.5 237.6Z" fill="#f7f9fc"/><path d="M690 229.2L704 231.29999999999998M690 232.2L704 234.29999999999998M690 235.2L704 237.29999999999998" stroke="#b4bfd0" stroke-width="0.800"/><circle cx="703.4" cy="237" r="6.8" fill="#43b540" stroke="#2f9a2d" stroke-width="0.800"/><circle cx="703.4" cy="235.3" r="4.76" fill="#fff" opacity="0.180"/><path d="M699.456 237h7.887999999999999M703.4 233.056v7.887999999999999" stroke="#f4fff2" stroke-width="2.448"/></svg>
<svg style="left:727px;top:216px" width="19" height="28" viewBox="727 216 19 28"><path d="M728.0 217L742 219.1L741.4 243.4L727.6 240.6Z" fill="#e6ebf1" stroke="#c6cdd7" stroke-width="0.800"/><path d="M727.8000000000001 231L741.7 233L741.4 243.4L727.6 240.6Z" fill="#dde3ea"/><circle cx="738.6" cy="236.3" r="5.5" fill="#43b540" stroke="#2f9a2d" stroke-width="0.800"/><circle cx="738.6" cy="234.925" r="3.8499999999999996" fill="#fff" opacity="0.180"/><path d="M735.41 236.3h6.38M738.6 233.11v6.38" stroke="#f4fff2" stroke-width="1.98"/></svg>
<span id="t73" class="t" style="left:756.3px;top:221.50px;transform:scaleX(0.9467);">Yeni</span>
<svg style="left:792px;top:215px" width="25" height="28" viewBox="792 215 25 28"><path d="M793 217.1L812.4 217.1L809.8 238.9Q802.7 241.4 795.6 238.9Z" fill="#9c9c9c" stroke="#8a8a8a" stroke-width="0.800"/><path d="M798 219.6L800 236.9L803 236.9L802 219.6Z" fill="#5a5a5a"/><path d="M803.5 219.6L802.5 231.9L805.5 231.9L807 219.6Z" fill="#5a5a5a"/><ellipse cx="802.7" cy="217.29999999999998" rx="9.699999999999989" ry="1.900" fill="#dedede" stroke="#8a8a8a" stroke-width="0.800"/><circle cx="809" cy="235.8" r="6" fill="#7d7d7d" stroke="#666" stroke-width="0.800"/><path d="M806.48 233.28l5.04 5.04M811.52 233.28l-5.04 5.04" stroke="#fff" stroke-width="2.4000000000000004"/></svg>
<span id="t74" class="t" style="left:825.2px;top:221.50px;transform:scaleX(0.8244);color:#a8a8a8;">Sil</span>
<svg style="left:851px;top:216px" width="29" height="29" viewBox="851 216 29 29"><circle cx="865.5" cy="230.6" r="12.700" fill="#e2e2e2" stroke="#cfcfcf" stroke-width="0.800"/><circle cx="865.5" cy="230.6" r="11" fill="#a9a9a9"/><path d="M854.7 231.6a10.800 10.800 0 0 1 21.600 0q-10.800 -5 -21.600 0z" fill="#bdbdbd"/><path d="M865.5 223.6l6.700 7h-3.700v6.500h-6v-6.500h-3.700z" fill="#fff" stroke="#9a9a9a" stroke-width="0.500"/></svg>
<svg style="left:892px;top:216px" width="29" height="29" viewBox="892 216 29 29"><circle cx="906.3" cy="230.6" r="12.700" fill="#e2e2e2" stroke="#cfcfcf" stroke-width="0.800"/><circle cx="906.3" cy="230.6" r="11" fill="#a9a9a9"/><path d="M895.5 231.6a10.800 10.800 0 0 1 21.600 0q-10.800 -5 -21.600 0z" fill="#bdbdbd"/><g transform="rotate(180 906.3 230.6)"><path d="M906.3 223.6l6.700 7h-3.700v6.500h-6v-6.500h-3.700z" fill="#fff" stroke="#9a9a9a" stroke-width="0.500"/></g></svg>
<svg style="left:930px;top:216px" width="32" height="29" viewBox="930 216 32 29"><rect x="931.300" y="218" width="25" height="19.200" fill="#f3f6fa" stroke="#b2bccb" stroke-width="0.800"/><rect x="931.700" y="218.400" width="24.200" height="3.600" fill="#c4d4ec"/><path d="M950 217.200h5" stroke="#5f7fc8" stroke-width="1" stroke-dasharray="1 0.700"/><path d="M935 230.200l4.200-3.600 6.800 6.800 10.300-10.600 4.500 4.400-15 15.300z" fill="#ee4a33" stroke="#c63220" stroke-width="0.700"/><path d="M936.500 230l2.700-2.200 6.800 6.800 10.300-10.600" fill="none" stroke="#ff9a84" stroke-width="1"/></svg>
<div class="red" style="left:550px;top:203px;width:130px;height:47px;"></div>
<span id="t75" class="t" style="left:511px;top:260.50px;transform:scaleX(0.9598);">Kod</span>
<div class="inp" style="left:568px;top:257px;width:613px;height:21px;"></div>
<span id="t76" class="t" style="left:574.3px;top:260.50px;transform:scaleX(0.9794);">Elektronik</span>
<span id="t77" class="t" style="left:511.4px;top:284.50px;transform:scaleX(0.9826);">Açıklama</span>
<div class="inp" style="left:568px;top:281px;width:613px;height:21px;"></div>
<span id="t78" class="t" style="left:1197px;top:260.00px;transform:scaleX(0.9800);">Yetki Kodu</span>
<div class="inpl" style="left:1278px;top:257px;width:120px;height:20px;"></div>
<svg style="left:1363px;top:259px" width="16" height="16" viewBox="1363 259 16 16"><rect x="1363.5" y="259.5" width="15" height="15" rx="1.500" fill="#aecdf8" stroke="#5a7bb5"/><rect x="1364" y="260" width="14" height="5.500" fill="#d9e8fd"/><rect x="1366.2" y="269" width="2" height="2" fill="#0a0a3c"/><rect x="1370.2" y="269" width="2" height="2" fill="#0a0a3c"/><rect x="1374.2" y="269" width="2" height="2" fill="#0a0a3c"/></svg>
<svg style="left:1380px;top:259px" width="16" height="16" viewBox="1380 259 16 16"><rect x="1380.5" y="259.5" width="15" height="15" rx="1.500" fill="#f0f0f0" stroke="#5a5a5a"/><rect x="1383.5" y="263.5" width="9" height="7" rx="0.800" fill="#fff" stroke="#6f93d6"/><rect x="1384" y="264" width="8" height="1.800" fill="#8fb2ea"/><path d="M1385.5 267.5h5" stroke="#aaa" stroke-width="0.800"/></svg>
<span id="t79" class="t" style="left:1197px;top:285.00px;transform:scaleX(0.9978);">Kayıt Durumu</span>
<div class="combo" style="left:1278px;top:280px;width:119px;height:23px;"></div>
<span id="t80" class="t" style="left:1282px;top:285.00px;transform:scaleX(0.9859);">Kullanımda</span>
<svg style="left:1383px;top:288px" width="11" height="8" viewBox="1383 288 11 8"><path d="M1384 289.7l4.200 4.200 4.200-4.200" fill="none" stroke="#3c3c3c" stroke-width="1"/></svg>
<div class="red" style="left:504px;top:251px;width:366px;height:34px;"></div>
<div style="left:507px;top:332px;width:893px;height:396px;background:#fff;border:1px solid #d9d9d9;"></div>
<div style="left:558px;top:312px;width:45px;height:21px;background:#f0f0f0;border:1px solid #d9d9d9;"></div>
<div style="left:507px;top:310px;width:52px;height:23px;background:#fff;border:1px solid #d9d9d9;border-bottom:none;"></div>
<span id="t81" class="t" style="left:515.4px;top:314.00px;transform:scaleX(0.9179);">Genel</span>
<span id="t82" class="t" style="left:563.3px;top:315.60px;transform:scaleX(0.9676);">İhracat</span>
<span id="t83" class="t" style="left:514.8px;top:348.60px;transform:scaleX(0.9630);">Gönderim Şekli</span>
<span id="t84" class="t" style="left:514.8px;top:375.00px;transform:scaleX(0.9735);">Fatura Tipi</span>
<span id="t85" class="t" style="left:514.8px;top:400.70px;transform:scaleX(0.9659);">E-Fatura Profili</span>
<span id="t86" class="t" style="left:514.8px;top:427.00px;transform:scaleX(0.9613);">E-Fatura Türü</span>
<span id="t87" class="t" style="left:514.8px;top:450.70px;transform:scaleX(0.9740);">KDV Muafiyet Kodu</span>
<span id="t88" class="t" style="left:514.8px;top:474.80px;transform:scaleX(0.9724);">KDV Muafiyet Açıklaması</span>
<span id="t89" class="t" style="left:514.8px;top:498.80px;transform:scaleX(0.9399);">Web Satış Noktası</span>
<span id="t90" class="t" style="left:514.8px;top:522.70px;transform:scaleX(0.9480);">Taşıyıcı Kodu</span>
<span id="t91" class="t" style="left:514.8px;top:567.50px;transform:scaleX(0.9731);">Hedef Fatura Türü</span>
<span id="t92" class="t" style="left:514.8px;top:593.60px;transform:scaleX(0.9619);">Uygulama Şekli</span>
<span id="t93" class="t" style="left:514.8px;top:618.00px;transform:scaleX(0.9512);">Başlangıç Zamanı</span>
<span id="t94" class="t" style="left:514.8px;top:640.70px;transform:scaleX(0.9642);">Bitiş Zamanı</span>
<span id="t95" class="t" style="left:514.8px;top:663.80px;transform:scaleX(0.9731);">Hedef Kullanıcı</span>
<span id="t96" class="t" style="left:514.8px;top:686.60px;transform:scaleX(0.9773);">Filtre Tanımı</span>
<div class="combo" style="left:659px;top:344px;width:200px;height:23px;"></div>
<span id="t97" class="t" style="left:663px;top:348.60px;transform:scaleX(0.9926);">Elektronik</span>
<svg style="left:844px;top:352px" width="12" height="8" viewBox="844 352 12 8"><path d="M845.7 353.7l4.200 4.200 4.200-4.200" fill="none" stroke="#3c3c3c" stroke-width="1"/></svg>
<div class="combo" style="left:659px;top:370px;width:200px;height:23px;"></div>
<span id="t98" class="t" style="left:663px;top:374.60px;transform:scaleX(0.9663);">İşlem Yapma</span>
<svg style="left:844px;top:378px" width="12" height="8" viewBox="844 378 12 8"><path d="M845.7 379.7l4.200 4.200 4.200-4.200" fill="none" stroke="#3c3c3c" stroke-width="1"/></svg>
<div class="combo" style="left:659px;top:396px;width:200px;height:23px;"></div>
<span id="t99" class="t" style="left:663px;top:400.60px;transform:scaleX(0.9663);">İşlem Yapma</span>
<svg style="left:844px;top:404px" width="12" height="8" viewBox="844 404 12 8"><path d="M845.7 405.7l4.200 4.200 4.200-4.200" fill="none" stroke="#3c3c3c" stroke-width="1"/></svg>
<div class="combo" style="left:659px;top:422px;width:200px;height:23px;"></div>
<span id="t100" class="t" style="left:663px;top:426.60px;transform:scaleX(0.9663);">İşlem Yapma</span>
<svg style="left:844px;top:430px" width="12" height="8" viewBox="844 430 12 8"><path d="M845.7 431.7l4.200 4.200 4.200-4.200" fill="none" stroke="#3c3c3c" stroke-width="1"/></svg>
<div class="inpl" style="left:659px;top:448px;width:735px;height:20px;"></div>
<svg style="left:1376px;top:450px" width="16" height="16" viewBox="1376 450 16 16"><rect x="1376.5" y="450.5" width="15" height="15" rx="1.500" fill="#aecdf8" stroke="#5a7bb5"/><rect x="1377" y="451" width="14" height="5.500" fill="#d9e8fd"/><rect x="1379.2" y="460" width="2" height="2" fill="#0a0a3c"/><rect x="1383.2" y="460" width="2" height="2" fill="#0a0a3c"/><rect x="1387.2" y="460" width="2" height="2" fill="#0a0a3c"/></svg>
<div class="inp" style="left:659px;top:471px;width:735px;height:21px;"></div>
<div class="inp" style="left:659px;top:495px;width:735px;height:21px;"></div>
<div class="inp" style="left:659px;top:519px;width:735px;height:21px;"></div>
<div style="left:626px;top:551px;width:768px;height:1px;background:#a9a9a9;"></div>
<span id="t101" class="t b" style="left:515px;top:546.30px;transform:scaleX(0.9718);">Uygulama Filtreleri</span>
<div class="combo" style="left:659px;top:563px;width:200px;height:23px;"></div>
<span id="t102" class="t" style="left:663px;top:567.60px;transform:scaleX(0.9464);">E-Arşiv</span>
<svg style="left:844px;top:571px" width="12" height="8" viewBox="844 571 12 8"><path d="M845.7 572.7l4.200 4.200 4.200-4.200" fill="none" stroke="#3c3c3c" stroke-width="1"/></svg>
<div class="combo" style="left:659px;top:589px;width:200px;height:23px;"></div>
<span id="t103" class="t" style="left:663px;top:593.60px;transform:scaleX(1.0108);">Otomatik Uygula/Kaydet</span>
<svg style="left:844px;top:597px" width="12" height="8" viewBox="844 597 12 8"><path d="M845.7 598.7l4.200 4.200 4.200-4.200" fill="none" stroke="#3c3c3c" stroke-width="1"/></svg>
<div class="inpl" style="left:659px;top:615px;width:120px;height:20px;"></div>
<span id="t104" class="t" style="left:664px;top:618.00px;transform:scaleX(0.9078);">12.11.2018 00:00</span>
<svg style="left:761px;top:617px" width="17" height="17" viewBox="0 0 17 17"><rect x="0.500" y="0.500" width="15" height="15" rx="1.500" fill="#b9d3f8" stroke="#7a8797"/><rect x="1" y="1" width="14" height="6" fill="#d6e5fb"/><path d="M4 5.500l4 4.500 4-4.500" fill="none" stroke="#15224a" stroke-width="2"/></svg>
<div class="inpl" style="left:659px;top:639px;width:120px;height:19px;"></div>
<span id="t105" class="t" style="left:663px;top:640.70px;transform:scaleX(0.9661);">(Boş)</span>
<svg style="left:761px;top:640px" width="17" height="17" viewBox="0 0 17 17"><rect x="0.500" y="0.500" width="15" height="15" rx="1.500" fill="#b9d3f8" stroke="#7a8797"/><rect x="1" y="1" width="14" height="6" fill="#d6e5fb"/><path d="M4 5.500l4 4.500 4-4.500" fill="none" stroke="#15224a" stroke-width="2"/></svg>
<div class="inpl" style="left:659px;top:661px;width:735px;height:20px;"></div>
<svg style="left:1359px;top:663px" width="16" height="16" viewBox="1359 663 16 16"><rect x="1359.5" y="663.5" width="15" height="15" rx="1.500" fill="#aecdf8" stroke="#5a7bb5"/><rect x="1360" y="664" width="14" height="5.500" fill="#d9e8fd"/><rect x="1362.2" y="673" width="2" height="2" fill="#0a0a3c"/><rect x="1366.2" y="673" width="2" height="2" fill="#0a0a3c"/><rect x="1370.2" y="673" width="2" height="2" fill="#0a0a3c"/></svg>
<svg style="left:1376px;top:663px" width="16" height="16" viewBox="1376 663 16 16"><rect x="1376.5" y="663.5" width="15" height="15" rx="1.500" fill="#f0f0f0" stroke="#5a5a5a"/><rect x="1379.5" y="667.5" width="9" height="7" rx="0.800" fill="#fff" stroke="#6f93d6"/><rect x="1380" y="668" width="8" height="1.800" fill="#8fb2ea"/><path d="M1381.5 671.5h5" stroke="#aaa" stroke-width="0.800"/></svg>
<div class="inpl" style="left:659px;top:684px;width:735px;height:20px;"></div>
<svg style="left:1359px;top:686px" width="16" height="16" viewBox="1359 686 16 16"><rect x="1359.5" y="686.5" width="15" height="15" rx="1.500" fill="#aecdf8" stroke="#5a7bb5"/><rect x="1360" y="687" width="14" height="5.500" fill="#d9e8fd"/><rect x="1362.2" y="696" width="2" height="2" fill="#0a0a3c"/><rect x="1366.2" y="696" width="2" height="2" fill="#0a0a3c"/><rect x="1370.2" y="696" width="2" height="2" fill="#0a0a3c"/></svg>
<svg style="left:1376px;top:686px" width="16" height="16" viewBox="1376 686 16 16"><rect x="1376.5" y="686.5" width="15" height="15" rx="1.500" fill="#f0f0f0" stroke="#5a5a5a"/><rect x="1379.5" y="690.5" width="9" height="7" rx="0.800" fill="#fff" stroke="#6f93d6"/><rect x="1380" y="691" width="8" height="1.800" fill="#8fb2ea"/><path d="M1381.5 694.5h5" stroke="#aaa" stroke-width="0.800"/></svg>
<div class="red" style="left:507px;top:339px;width:359px;height:30px;"></div>
<div class="red" style="left:509px;top:541px;width:361px;height:97px;"></div>
</body></html>
